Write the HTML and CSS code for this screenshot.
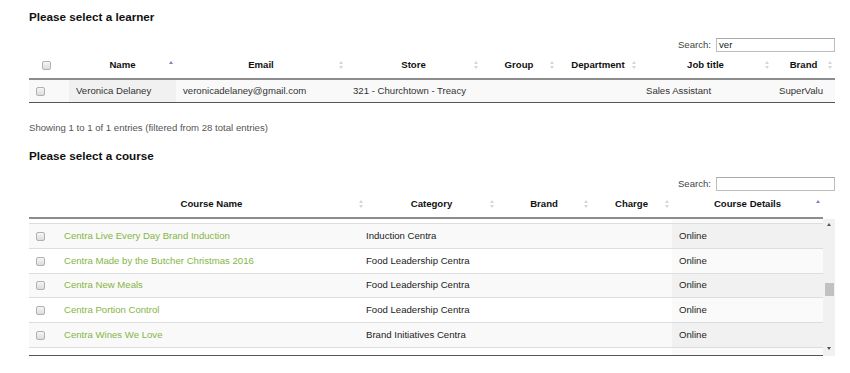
FILE: index.html
```html
<!DOCTYPE html>
<html>
<head>
  <title>Select learner and course</title>
  <link rel="stylesheet" href="styles.css">
</head>
<body>
  <div class="page">
    <h2 class="title">Please select a learner</h2>
    <div class="filter">
      <label>Search:<input class="search" type="text" value="ver"></label>
    </div>
    <table class="grid learners">
      <colgroup>
        <col style="width: 40px"><col style="width: 107px"><col style="width: 170px"><col style="width: 135px">
        <col style="width: 76px"><col style="width: 82px"><col style="width: 133px"><col style="width: 63px">
      </colgroup>
      <thead>
        <tr>
          <th class="chk"><input class="cb" type="checkbox"></th>
          <th class="sorting_asc">Name</th>
          <th class="sorting">Email</th>
          <th class="sorting">Store</th>
          <th class="sorting">Group</th>
          <th class="sorting">Department</th>
          <th class="sorting">Job title</th>
          <th class="sorting">Brand</th>
        </tr>
      </thead>
      <tbody>
        <tr class="odd">
          <td><input class="cb" type="checkbox"></td>
          <td class="sorting_1">Veronica Delaney</td>
          <td>veronicadelaney@gmail.com</td>
          <td>321 - Churchtown - Treacy</td>
          <td></td>
          <td></td>
          <td>Sales Assistant</td>
          <td>SuperValu</td>
        </tr>
      </tbody>
    </table>
    <div class="info">Showing 1 to 1 of 1 entries (filtered from 28 total entries)</div>

    <h2 class="title course-title">Please select a course</h2>
    <div class="filter">
      <label>Search:<input class="search" type="text"></label>
    </div>
    <table class="grid courses-head">
      <colgroup>
        <col style="width: 28px"><col style="width: 309px"><col style="width: 131px">
        <col style="width: 94px"><col style="width: 81px"><col style="width: 151px">
      </colgroup>
      <thead>
        <tr>
          <th></th>
          <th class="sorting">Course Name</th>
          <th class="sorting">Category</th>
          <th class="sorting">Brand</th>
          <th class="sorting">Charge</th>
          <th class="sorting_asc">Course Details</th>
        </tr>
      </thead>
    </table>
    <div class="scroll-wrap">
      <div class="scroll-body">
        <table class="grid courses">
          <colgroup>
            <col style="width: 28px"><col style="width: 302px"><col style="width: 138px">
            <col style="width: 94px"><col style="width: 81px"><col style="width: 151px">
          </colgroup>
          <tbody>
            <!-- rows scrolled just out of view -->
            <tr class="even">
              <td>&nbsp;</td><td></td><td></td><td></td><td></td>
              <td class="sorting_1"></td>
            </tr>
            <tr class="odd">
              <td><input class="cb" type="checkbox"></td>
              <td><a href="#">Centra Live Every Day Brand Induction</a></td>
              <td>Induction Centra</td><td></td><td></td>
              <td class="sorting_1">Online</td>
            </tr>
            <tr class="even">
              <td><input class="cb" type="checkbox"></td>
              <td><a href="#">Centra Made by the Butcher Christmas 2016</a></td>
              <td>Food Leadership Centra</td><td></td><td></td>
              <td class="sorting_1">Online</td>
            </tr>
            <tr class="odd">
              <td><input class="cb" type="checkbox"></td>
              <td><a href="#">Centra New Meals</a></td>
              <td>Food Leadership Centra</td><td></td><td></td>
              <td class="sorting_1">Online</td>
            </tr>
            <tr class="even">
              <td><input class="cb" type="checkbox"></td>
              <td><a href="#">Centra Portion Control</a></td>
              <td>Food Leadership Centra</td><td></td><td></td>
              <td class="sorting_1">Online</td>
            </tr>
            <tr class="odd">
              <td><input class="cb" type="checkbox"></td>
              <td><a href="#">Centra Wines We Love</a></td>
              <td>Brand Initiatives Centra</td><td></td><td></td>
              <td class="sorting_1">Online</td>
            </tr>
            <tr class="even">
              <td>&nbsp;</td><td></td><td></td><td></td><td></td>
              <td class="sorting_1"></td>
            </tr>
          </tbody>
        </table>
      </div>
      <div class="scrollbar">
        <span class="sb-up"></span>
        <span class="sb-thumb"></span>
        <span class="sb-down"></span>
      </div>
    </div>
  </div>
</body>
</html>
```
FILE: styles.css
```css
body {
  margin: 0;
  font-family: "Liberation Sans", Arial, sans-serif;
  font-size: 9.6px;
  color: #333;
  background: #fff;
}

.page {
  width: 806px;
  padding: 10px 0 0 29px;
}

.title {
  margin: 0;
  font-size: 11.7px;
  line-height: 14px;
  font-weight: bold;
  color: #111;
}
.course-title {
  margin-top: 15px;
}

.filter {
  display: flex;
  justify-content: flex-end;
  align-items: center;
  height: 15px;
  margin-top: 13px;
}
.filter label {
  display: flex;
  align-items: center;
  color: #444;
}
.search {
  width: 119px;
  height: 14px;
  margin: 0 0 0 5px;
  padding: 0 2px;
  box-sizing: border-box;
  border: 1px solid #bdbdbd;
  border-top-color: #a9a9a9;
  font-family: inherit;
  font-size: 9.6px;
  color: #222;
  outline: none;
}

.grid {
  table-layout: fixed;
  border-collapse: separate;
  border-spacing: 0;
}
.learners {
  width: 806px;
}
.courses-head,
.courses {
  width: 794px;
}

.grid th {
  position: relative;
  padding: 7px 10px;
  line-height: 12px;
  font-weight: bold;
  color: #111;
  text-align: center;
  white-space: nowrap;
  border-bottom: 2px solid #8c8c8c;
}
.grid th.chk {
  padding-right: 16px;
}
.grid td {
  padding: 5px 7px;
  line-height: 12px;
  white-space: nowrap;
  overflow: hidden;
}
.learners tbody tr:last-child td {
  border-bottom: 1px solid #555;
}

/* sort arrows */
.sorting::before,
.sorting::after,
.sorting_asc::before {
  content: "";
  position: absolute;
  right: 3px;
  border-left: 2.5px solid transparent;
  border-right: 2.5px solid transparent;
}
.sorting::before,
.sorting_asc::before {
  top: calc(50% - 4px);
  border-bottom: 3.5px solid #d6d6d6;
}
.sorting::after {
  top: calc(50% + 1px);
  border-top: 3.5px solid #d6d6d6;
}
.sorting_asc::before {
  border-bottom-color: #8080c4;
}

tr.odd {
  background: #f9f9f9;
}
tr.even {
  background: #fff;
}
tr.odd td.sorting_1 {
  background: #f1f1f1;
}
tr.even td.sorting_1 {
  background: #fafafa;
}

.cb {
  -webkit-appearance: none;
  appearance: none;
  display: inline-block;
  width: 9px;
  height: 9px;
  margin: 0;
  vertical-align: middle;
  box-sizing: border-box;
  border: 1px solid #b1b1b1;
  border-radius: 2px;
  background: linear-gradient(#f5f5f5, #dcdcdc);
}

.info {
  margin-top: 19px;
  line-height: 12px;
  color: #555;
}

.scroll-wrap {
  display: flex;
  width: 806px;
  height: 137px;
}
.scroll-body {
  width: 794px;
  overflow: hidden;
  box-sizing: border-box;
  border-bottom: 1px solid #555;
}
.courses {
  margin-top: -20.8px;
}
.courses td {
  padding: 5.9px 7px;
  border-top: 1px solid #ddd;
  color: #222;
}
.courses a {
  color: #86b544;
  text-decoration: none;
}

.scrollbar {
  width: 12px;
  display: flex;
  flex-direction: column;
  align-items: center;
  background: #f1f1f1;
}
.sb-up,
.sb-down {
  width: 0;
  height: 0;
  border-left: 2.5px solid transparent;
  border-right: 2.5px solid transparent;
}
.sb-up {
  margin-top: 4px;
  border-bottom: 3px solid #555;
}
.sb-down {
  margin-top: auto;
  margin-bottom: 6px;
  border-top: 3px solid #555;
}
.sb-thumb {
  width: 9px;
  height: 13px;
  margin-top: 57px;
  background: #c1c1c1;
}
```
